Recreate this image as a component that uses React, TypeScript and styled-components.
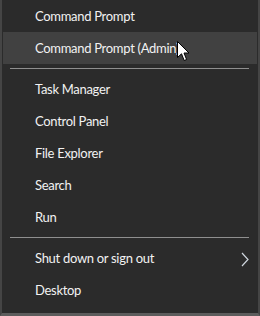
import styled, { createGlobalStyle } from "styled-components";

const GlobalStyle = createGlobalStyle`
  html, body {
    margin: 0;
    padding: 0;
    background: #2b2b2b;
  }
`;

type Entry = { label: string; active?: boolean; submenu?: boolean } | "sep";

const entries: Entry[] = [
  { label: "Command Prompt" },
  { label: "Command Prompt (Admin)", active: true },
  "sep",
  { label: "Task Manager" },
  { label: "Control Panel" },
  { label: "File Explorer" },
  { label: "Search" },
  { label: "Run" },
  "sep",
  { label: "Shut down or sign out", submenu: true },
  { label: "Desktop" },
];

const App = () => {
  return (
    <>
      <GlobalStyle />
      <Menu>
        {entries.map((e, i) =>
          e === "sep" ? (
            <Separator key={i} />
          ) : (
            <Item key={i} $active={e.active}>
              <Label>{e.label}</Label>
              {e.submenu && (
                <Chevron width="8" height="15" viewBox="0 0 8 15">
                  <path d="M1 1 L7 7.5 L1 14" fill="none" stroke="#cfd6de" strokeWidth="1.2" />
                </Chevron>
              )}
            </Item>
          )
        )}
        <Cursor width="13" height="21" viewBox="0 0 13 21">
          <path
            d="M0.5 0.5 L0.5 16.5 L4.5 12.8 L7.2 19.5 L9.6 18.5 L7 12 L12 12 Z"
            fill="#ffffff"
            stroke="#000000"
            strokeWidth="1"
            strokeLinejoin="round"
          />
        </Cursor>
      </Menu>
    </>
  );
};

export default App;

const Menu = styled.div`
  position: relative;
  width: 260px;
  height: 316px;
  box-sizing: border-box;
  background: #2b2b2b;
  border-left: 2px solid #454545;
  border-right: 2px solid #454545;
  border-bottom: 3px solid #5c5c5c;
  padding-bottom: 7px;
  display: flex;
  flex-direction: column;
  overflow: hidden;
  font-family: Lato, "Open Sans", sans-serif;
`;

const Item = styled.div<{ $active?: boolean }>`
  height: 32px;
  flex: none;
  margin: 0 1px;
  padding: 0 8px 0 32px;
  display: flex;
  align-items: center;
  justify-content: space-between;
  background: ${(p) => (p.$active ? "#414141" : "transparent")};
  color: #f2f2f2;
`;

const Label = styled.span`
  font-size: 13px;
  letter-spacing: -0.3px;
  line-height: 1;
  padding-top: 1px;
`;

const Chevron = styled.svg`
  display: block;
  margin-top: 2px;
`;

const Separator = styled.div`
  flex: none;
  height: 9px;
  margin: 0 9px 0 8px;
  display: flex;
  align-items: center;
  padding-bottom: 1px;
  box-sizing: border-box;

  &::after {
    content: "";
    display: block;
    width: 100%;
    height: 1px;
    background: #8f8f8f;
  }
`;

const Cursor = styled.svg`
  position: absolute;
  left: 175px;
  top: 41px;
`;
